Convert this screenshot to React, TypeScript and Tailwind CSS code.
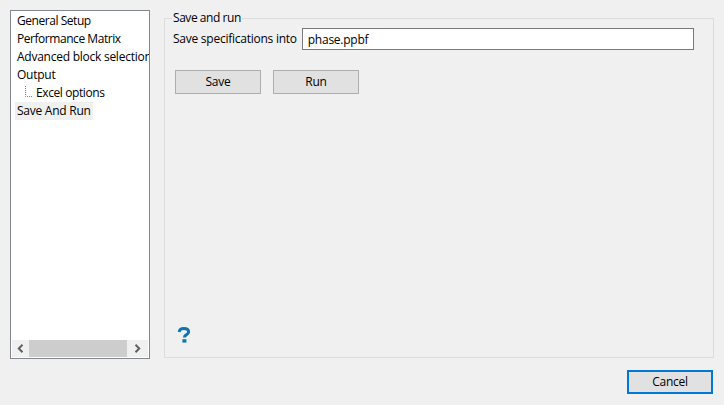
const font = "font-['Open_Sans','Noto_Sans',sans-serif]";

function Row({ label, selected, tight }: { label: string; selected?: boolean; tight?: boolean }) {
  return (
    <div className="h-[18px] pl-[3px] flex items-center whitespace-nowrap">
      <span className={`h-[18px] leading-[18px] px-[2px] ${tight ? "tracking-[-0.45px]" : ""} ${selected ? "bg-[#f0f0f0]" : ""}`}>{label}</span>
    </div>
  );
}

function Btn({ label }: { label: string }) {
  return (
    <button className="w-[86px] h-[24px] bg-[#e1e1e1] border border-[#adadad] text-[12px] leading-none text-[#000]">
      {label}
    </button>
  );
}

export default function App() {
  return (
    <div className={`w-[724px] h-[405px] bg-[#f0f0f0] overflow-hidden text-[12px] tracking-[-0.25px] text-[#000] ${font} flex flex-col pt-[10px] pl-[10px] pr-[10px]`}>
      <div className="flex gap-[14px] h-[349px]">
        <div className="w-[140px] h-[349px] shrink-0 bg-white border border-[#828790] flex flex-col overflow-hidden">
          <div className="flex-1 pt-[1px] pl-[1px] overflow-hidden">
            <Row label="General Setup" tight />
            <Row label="Performance Matrix" tight />
            <Row label="Advanced block selection" />
            <Row label="Output" />
            <div className="h-[18px] flex items-center whitespace-nowrap pl-[13px]">
              <svg width="10" height="12" className="mb-[3px] shrink-0">
                <path d="M0.5 0V10.5H8" fill="none" stroke="#808080" strokeDasharray="1 1" />
              </svg>
              <span className="pl-[1px] tracking-[-0.4px]">Excel options</span>
            </div>
            <Row label="Save And Run" selected />
          </div>
          <div className="h-[17px] mx-[1px] mb-[1px] flex bg-[#f0f0f0] shrink-0">
            <div className="w-[17px] flex items-center justify-center">
              <svg width="7" height="9" viewBox="0 0 7 9"><path d="M5.5 0.8L1.8 4.5L5.5 8.2" fill="none" stroke="#606060" strokeWidth="2" /></svg>
            </div>
            <div className="w-[98px] bg-[#cdcdcd]" />
            <div className="flex-1 flex items-center justify-center">
              <svg width="7" height="9" viewBox="0 0 7 9"><path d="M1.5 0.8L5.2 4.5L1.5 8.2" fill="none" stroke="#606060" strokeWidth="2" /></svg>
            </div>
          </div>
        </div>
        <fieldset className="flex-1 h-[347px] mt-[1px] border border-[#dcdcdc] pl-[8px] pr-[19px] flex flex-col min-w-0">
          <legend className="-ml-[1px] px-[1px] leading-[14px] h-[14px] tracking-[-0.45px]">Save and run</legend>
          <div className="flex items-center mt-[3px] h-[22px]">
            <span className="whitespace-nowrap">Save specifications into</span>
            <input
              readOnly
              value="phase.ppbf"
              className="ml-[5px] w-[392px] h-[22px] bg-white border border-[#7a7a7a] px-[5px] outline-none"
            />
          </div>
          <div className="flex gap-[12px] mt-[20px] ml-[2px]">
            <Btn label="Save" />
            <Btn label="Run" />
          </div>
          <div className="mt-auto mb-[13px] ml-[4px] h-[18px] flex items-center">
            <svg width="14" height="16" viewBox="0 0 14 16">
              <path d="M2.2 5C2.4 2.8 4.2 1.6 6.8 1.6C9.6 1.6 11.6 2.8 11.6 4.9C11.6 6.4 10.5 7.1 9.2 7.9C8 8.6 7.4 9.1 7.4 10.6" fill="none" stroke="#0f75b5" strokeWidth="3" />
              <rect x="5.4" y="12.2" width="4" height="3.4" fill="#0f75b5" />
            </svg>
          </div>
        </fieldset>
      </div>
      <div className="flex justify-end mt-[11px] pr-[1px]">
        <button className="w-[86px] h-[24px] bg-[#e1e1e1] border-2 border-[#0078d7] text-[12px] leading-none text-[#000]">Cancel</button>
      </div>
    </div>
  );
}
